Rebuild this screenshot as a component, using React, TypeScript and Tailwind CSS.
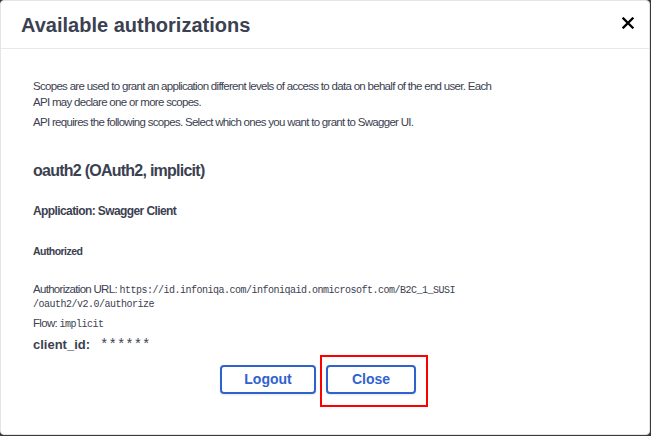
import React from "react";

const mono = "font-['Liberation_Mono','DejaVu_Sans_Mono',monospace]";

function CloseIcon() {
  return (
    <svg width="12" height="12" viewBox="0 0 12 12" className="text-black">
      <path d="M1.5 1.5L10.5 10.5M10.5 1.5L1.5 10.5" stroke="currentColor" strokeWidth={2.3} strokeLinecap="square" />
    </svg>
  );
}

export default function App() {
  return (
    <div className="w-[651px] h-[436px] bg-[#3a3a3a] overflow-hidden">
      <div className="w-[650px] h-[435px] bg-white border border-[#e4e4e4] rounded-[4px] text-[#3b4151] font-['Liberation_Sans',Arial,sans-serif] flex flex-col">
        {/* header */}
        <div className="h-[48px] border-b border-[#e8e8e8] flex items-center justify-between pl-[20px] pr-[15px]">
          <h3 className="text-[20px] font-bold leading-none">Available authorizations</h3>
          <button aria-label="Close" className="w-[12px] h-[12px] flex items-center justify-center mb-[3px]">
            <CloseIcon />
          </button>
        </div>

        {/* body */}
        <div className="pl-[32px] pr-[151px] pt-[29px] text-[11.5px] tracking-[-0.7px]">
          <p className="leading-[16px]">
            Scopes are used to grant an application different levels of access to data on behalf of the end user. Each API may declare one or more scopes.
          </p>
          <p className="leading-[16px] mt-[4px]">
            API requires the following scopes. Select which ones you want to grant to Swagger UI.
          </p>

          <h4 className="text-[16px] font-bold leading-[20px] tracking-[-0.75px] mt-[31px]">oauth2 (OAuth2, implicit)</h4>

          <p className="text-[12px] font-bold leading-[16px] tracking-[-0.6px] mt-[22px]">Application: Swagger Client</p>

          <h6 className="text-[10.5px] font-bold leading-[14px] tracking-[-0.55px] mt-[25px]">Authorized</h6>

          <div className="leading-[14px] mt-[24px]">
            <div className="h-[14px]">
              Authorization URL:{" "}
              <code className={`${mono} text-[10px] leading-none tracking-[-0.5px]`}>
                https://id.infoniqa.com/infoniqaid.onmicrosoft.com/B2C_1_SUSI
              </code>
            </div>
            <div className="h-[14px]">
              <code className={`${mono} text-[10px] leading-none tracking-[-0.5px]`}>/oauth2/v2.0/authorize</code>
            </div>
          </div>
          <p className="h-[14px] leading-[14px] mt-[6px]">
            Flow: <code className={`${mono} text-[10px] leading-none tracking-[-0.5px]`}>implicit</code>
          </p>

          <div className="flex items-center gap-[10px] mt-[7px] tracking-normal">
            <label className="text-[13px] font-bold leading-[16px]">client_id:</label>
            <code className={`${mono} text-[14px] leading-[16px]`}>******</code>
          </div>
        </div>

        {/* buttons */}
        <div className="flex justify-center gap-[10px] pr-[14px] mt-[12px]">
          <button className="w-[96px] h-[29px] border-2 border-[#2f62cf] rounded-[4px] text-[#2f62cf] text-[14px] font-bold shadow-[0_1px_2px_rgba(0,0,0,0.1)]">
            Logout
          </button>
          <div className="relative">
            <button className="w-[90px] h-[29px] border-2 border-[#2f62cf] rounded-[4px] text-[#2f62cf] text-[14px] font-bold shadow-[0_1px_2px_rgba(0,0,0,0.1)]">
              Close
            </button>
            <div className="absolute left-[-6px] top-[-10px] w-[108px] h-[52px] border-2 border-[#ff0000] pointer-events-none" />
          </div>
        </div>
      </div>
    </div>
  );
}
